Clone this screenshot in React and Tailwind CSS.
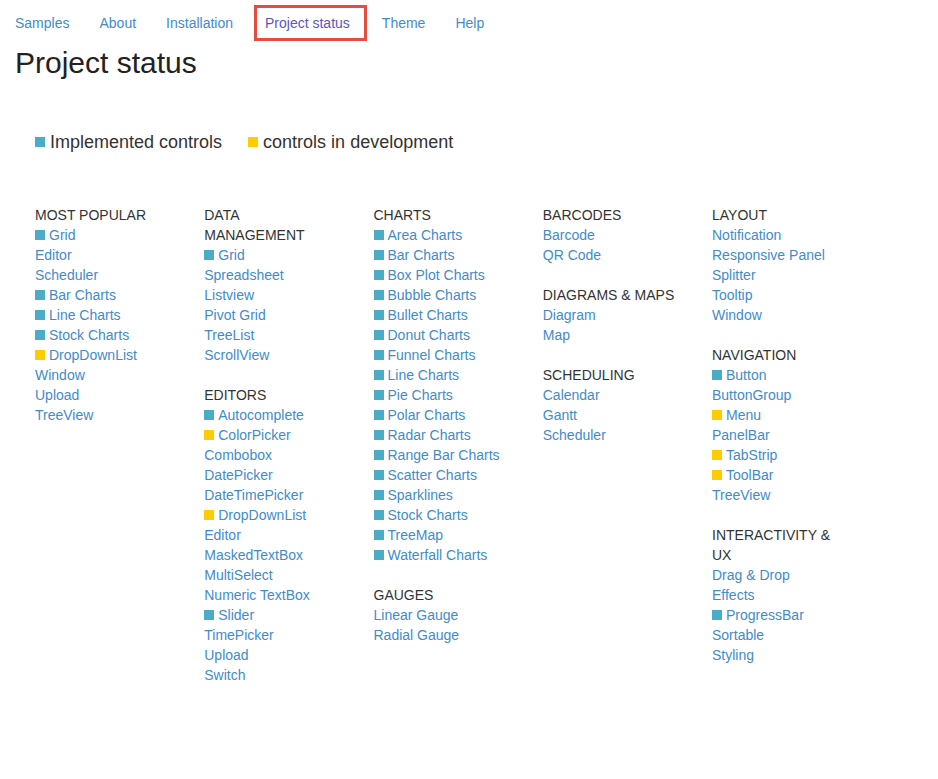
import React from "react";

const B = "b"; // implemented
const Y = "y"; // in development

const columns = [
  [
    {
      title: "MOST POPULAR",
      items: [
        ["Grid", B],
        ["Editor"],
        ["Scheduler"],
        ["Bar Charts", B],
        ["Line Charts", B],
        ["Stock Charts", B],
        ["DropDownList", Y],
        ["Window"],
        ["Upload"],
        ["TreeView"],
      ],
    },
  ],
  [
    {
      title: "DATA MANAGEMENT",
      items: [
        ["Grid", B],
        ["Spreadsheet"],
        ["Listview"],
        ["Pivot Grid"],
        ["TreeList"],
        ["ScrollView"],
      ],
    },
    {
      title: "EDITORS",
      items: [
        ["Autocomplete", B],
        ["ColorPicker", Y],
        ["Combobox"],
        ["DatePicker"],
        ["DateTimePicker"],
        ["DropDownList", Y],
        ["Editor"],
        ["MaskedTextBox"],
        ["MultiSelect"],
        ["Numeric TextBox"],
        ["Slider", B],
        ["TimePicker"],
        ["Upload"],
        ["Switch"],
      ],
    },
  ],
  [
    {
      title: "CHARTS",
      items: [
        ["Area Charts", B],
        ["Bar Charts", B],
        ["Box Plot Charts", B],
        ["Bubble Charts", B],
        ["Bullet Charts", B],
        ["Donut Charts", B],
        ["Funnel Charts", B],
        ["Line Charts", B],
        ["Pie Charts", B],
        ["Polar Charts", B],
        ["Radar Charts", B],
        ["Range Bar Charts", B],
        ["Scatter Charts", B],
        ["Sparklines", B],
        ["Stock Charts", B],
        ["TreeMap", B],
        ["Waterfall Charts", B],
      ],
    },
    {
      title: "GAUGES",
      items: [["Linear Gauge"], ["Radial Gauge"]],
    },
  ],
  [
    { title: "BARCODES", items: [["Barcode"], ["QR Code"]] },
    { title: "DIAGRAMS & MAPS", items: [["Diagram"], ["Map"]] },
    { title: "SCHEDULING", items: [["Calendar"], ["Gantt"], ["Scheduler"]] },
  ],
  [
    {
      title: "LAYOUT",
      items: [
        ["Notification"],
        ["Responsive Panel"],
        ["Splitter"],
        ["Tooltip"],
        ["Window"],
      ],
    },
    {
      title: "NAVIGATION",
      items: [
        ["Button", B],
        ["ButtonGroup"],
        ["Menu", Y],
        ["PanelBar"],
        ["TabStrip", Y],
        ["ToolBar", Y],
        ["TreeView"],
      ],
    },
    {
      title: "INTERACTIVITY & UX",
      items: [
        ["Drag & Drop"],
        ["Effects"],
        ["ProgressBar", B],
        ["Sortable"],
        ["Styling"],
      ],
    },
  ],
];

function Marker({ kind }) {
  if (kind === B) return <span className="inline-block w-[10px] h-[10px] bg-[#4bacc6] mr-[4px]" />;
  if (kind === Y) return <span className="inline-block w-[10px] h-[10px] bg-[#ffcc00] mr-[4px]" />;
  return null;
}

export default function App() {
  const nav = ["Samples", "About", "Installation", "Project status", "Theme", "Help"];
  return (
    <div className="min-h-screen bg-white text-[#333] font-['Liberation_Sans',Arial,sans-serif] text-[14px] leading-[20px]">
      {/* Nav */}
      <ul className="flex items-center pt-[5px] h-[41px]">
        {nav.map((n) =>
          n === "Project status" ? (
            <li
              key={n}
              className="ml-[6px] border-[3px] border-[#e74c3c] h-[36px] flex items-center pl-[8px] pr-[14px] text-[#5d55c4]"
            >
              {n}
            </li>
          ) : (
            <li key={n} className="px-[15px] text-[#428bca] h-[36px] flex items-center">
              {n}
            </li>
          )
        )}
      </ul>

      {/* Title */}
      <h1 className="px-[15px] text-[30px] leading-[36px] mt-[4px] text-[#222]">Project status</h1>

      {/* Legend */}
      <div className="flex items-center pl-[35px] mt-[49px] text-[18px] leading-[24px]">
        <span className="inline-block w-[10px] h-[10px] bg-[#4bacc6] mr-[5px]" />
        <span>Implemented controls</span>
        <span className="inline-block w-[10px] h-[10px] bg-[#ffcc00] ml-[26px] mr-[5px]" />
        <span>controls in development</span>
      </div>

      {/* Columns */}
      <div className="flex pl-[35px] mt-[51px]">
        {columns.map((col, ci) => (
          <div key={ci} className="w-[169.25px] pr-[34px] flex flex-col gap-[20px]">
            {col.map((sec) => (
              <div key={sec.title}>
                <div className="text-[#333]">{sec.title}</div>
                <ul>
                  {sec.items.map(([label, kind], i) => (
                    <li key={i} className="flex items-center text-[#428bca] whitespace-nowrap">
                      <Marker kind={kind} />
                      {label}
                    </li>
                  ))}
                </ul>
              </div>
            ))}
          </div>
        ))}
      </div>
    </div>
  );
}
